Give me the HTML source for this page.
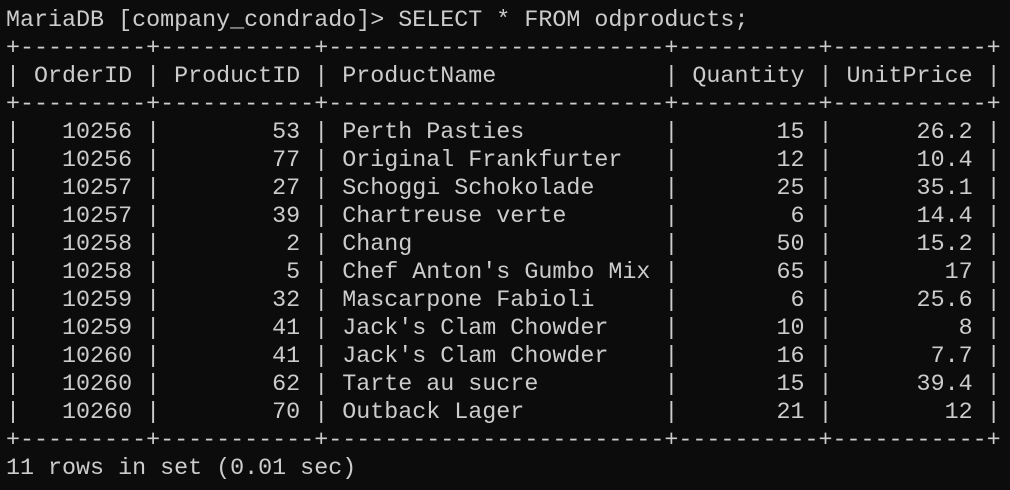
<!DOCTYPE html>
<html><head><style>
html,body{margin:0;padding:0;background:#0c0c0c;width:1010px;height:490px;overflow:hidden}
pre{margin:0;position:absolute;left:6px;top:7px;font-family:"Liberation Mono",monospace;font-size:23.35px;line-height:28px;color:#cccccc;letter-spacing:0}
</style></head><body>
<pre>MariaDB [company_condrado]&gt; SELECT * FROM odproducts;
+---------+-----------+------------------------+----------+-----------+
| OrderID | ProductID | ProductName            | Quantity | UnitPrice |
+---------+-----------+------------------------+----------+-----------+
|   10256 |        53 | Perth Pasties          |       15 |      26.2 |
|   10256 |        77 | Original Frankfurter   |       12 |      10.4 |
|   10257 |        27 | Schoggi Schokolade     |       25 |      35.1 |
|   10257 |        39 | Chartreuse verte       |        6 |      14.4 |
|   10258 |         2 | Chang                  |       50 |      15.2 |
|   10258 |         5 | Chef Anton's Gumbo Mix |       65 |        17 |
|   10259 |        32 | Mascarpone Fabioli     |        6 |      25.6 |
|   10259 |        41 | Jack's Clam Chowder    |       10 |         8 |
|   10260 |        41 | Jack's Clam Chowder    |       16 |       7.7 |
|   10260 |        62 | Tarte au sucre         |       15 |      39.4 |
|   10260 |        70 | Outback Lager          |       21 |        12 |
+---------+-----------+------------------------+----------+-----------+
11 rows in set (0.01 sec)</pre>
</body></html>
